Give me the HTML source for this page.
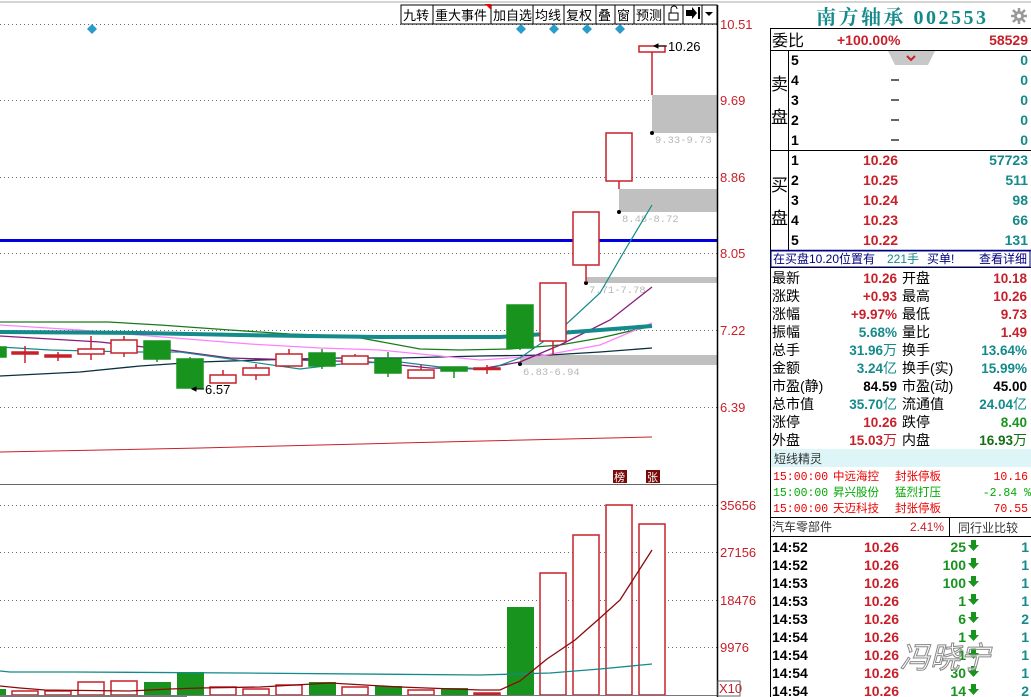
<!DOCTYPE html>
<html><head><meta charset="utf-8"><style>
html,body{margin:0;padding:0;background:#fff;}
svg{display:block;font-family:"Liberation Sans","Noto Sans CJK SC",sans-serif;}
.r{fill:#c8202a}.t{fill:#148a8a}.g{fill:#18941e}.k{fill:#000}
.b{font-weight:bold}
.m{font-family:"Liberation Mono","Noto Sans CJK SC",monospace;}
</style></head><body>
<svg width="1031" height="697" viewBox="0 0 1031 697" xmlns="http://www.w3.org/2000/svg">
<rect width="1031" height="697" fill="#fff"/>
<line x1="0" y1="2" x2="1031" y2="2" stroke="#aaa" stroke-width="1"/>
<g stroke="#666" stroke-width="1" stroke-dasharray="1,3">
<line x1="0" y1="24.5" x2="717" y2="24.5"/><line x1="0" y1="100.5" x2="717" y2="100.5"/><line x1="0" y1="177.5" x2="717" y2="177.5"/><line x1="0" y1="253.5" x2="717" y2="253.5"/><line x1="0" y1="330.5" x2="717" y2="330.5"/><line x1="0" y1="407.5" x2="717" y2="407.5"/>
<line x1="0" y1="505.5" x2="717" y2="505.5"/><line x1="0" y1="552.5" x2="717" y2="552.5"/><line x1="0" y1="600.5" x2="717" y2="600.5"/><line x1="0" y1="647.5" x2="717" y2="647.5"/>
</g>
<rect x="401" y="5" width="316" height="19" fill="#fff" stroke="#000"/>
<g stroke="#000"><line x1="433" y1="5" x2="433" y2="24"/><line x1="491" y1="5" x2="491" y2="24"/><line x1="533" y1="5" x2="533" y2="24"/><line x1="564" y1="5" x2="564" y2="24"/><line x1="596" y1="5" x2="596" y2="24"/><line x1="615" y1="5" x2="615" y2="24"/><line x1="634" y1="5" x2="634" y2="24"/><line x1="664" y1="5" x2="664" y2="24"/><line x1="683" y1="5" x2="683" y2="24"/><line x1="702" y1="5" x2="702" y2="24"/></g>
<polygon points="485,4 491,4 491,10" fill="#e00"/>
<g font-size="13" class="k"><text x="403" y="20">九转</text><text x="435" y="20">重大事件</text><text x="493" y="20">加自选</text><text x="535" y="20">均线</text><text x="566" y="20">复权</text><text x="598" y="20">叠</text><text x="617" y="20">窗</text><text x="636" y="20">预测</text></g>
<rect x="669" y="13" width="9" height="7" fill="none" stroke="#000"/><path d="M671 13 V9 A3 3 0 0 1 677 9" fill="none" stroke="#000"/>
<path d="M686 10 h6 v-3 l5 6 l-5 6 v-3 h-6z M698 7 h2 v12 h-2z" fill="#000"/>
<polygon points="705,12 713,12 709,16" fill="#000"/>
<g fill="#2a9ccc"><polygon points="92,24 97,29 92,34 87,29"/><polygon points="521,24 526,29 521,34 516,29"/><polygon points="554,24 559,29 554,34 549,29"/><polygon points="587,24 592,29 587,34 582,29"/><polygon points="620,24 625,29 620,34 615,29"/></g>
<g fill="#c0c0c0"><rect x="652" y="95" width="65" height="38"/><rect x="619" y="189" width="98" height="23"/><rect x="586" y="277" width="131" height="6"/><rect x="520" y="355" width="197" height="10"/></g>
<g font-size="10.5" fill="#b8b8b8" class="m"><text x="655" y="143">9.33-9.73</text><text x="622" y="222">8.48-8.72</text><text x="589" y="293">7.71-7.78</text><text x="523" y="375">6.83-6.94</text></g>
<g fill="#000"><circle cx="652" cy="133" r="2"/><circle cx="619" cy="212" r="2"/><circle cx="586" cy="283" r="2"/><circle cx="520" cy="364" r="2"/></g>
<rect x="0" y="239" width="717" height="3" fill="#0000e0"/>
<polyline points="0,452 200,448 400,443 652,437" fill="none" stroke="#c8202a" stroke-width="1"/>
<g fill="none">
<polyline points="0,376 80,372 140,366 200,362 260,360 340,358 400,358 480,356 550,355 600,352 652,348" stroke="#0a3040" stroke-width="1.3"/>
<polyline points="0,322 108,322 160,325 230,330 290,334 350,336 420,349 460,350 510,349 560,345 600,338 652,326" stroke="#1a7a1a" stroke-width="1.3"/>
<polyline points="0,325 80,330 150,336 250,344 320,348 380,350 430,355 480,360 540,356 600,345 652,323" stroke="#ff80ff" stroke-width="1.3"/>
<polyline points="0,336 100,342 170,350 230,358 300,360 370,362 430,368 480,369 520,362 560,345 610,320 652,287" stroke="#8a1a7a" stroke-width="1.3"/>
<polyline points="0,347 50,350 130,352 180,352 230,359 300,369 350,363 400,362 440,367 490,369 520,358 560,330 600,293 625,250 652,205" stroke="#148a8a" stroke-width="1.2"/>
<polyline points="0,332 140,333 240,335 380,337 500,337 560,333 600,330 652,326" stroke="#148a8a" stroke-width="4"/>
</g>
<g stroke="#c8202a" stroke-width="1.5" fill="#fff">
<line x1="25" y1="346" x2="25" y2="363"/><rect x="12" y="352" width="26" height="2" fill="#c8202a"/>
<line x1="58" y1="352" x2="58" y2="361"/><rect x="45" y="355" width="26" height="2" fill="#c8202a"/>
<line x1="91" y1="336" x2="91" y2="360"/><rect x="78" y="349" width="26" height="5"/>
<line x1="124" y1="336" x2="124" y2="357"/><rect x="111" y="340" width="26" height="13"/>
<line x1="223" y1="370" x2="223" y2="375"/><rect x="210" y="375" width="26" height="8"/>
<line x1="256" y1="364" x2="256" y2="380"/><rect x="243" y="368" width="26" height="7"/>
<line x1="289" y1="349" x2="289" y2="367"/><rect x="276" y="354" width="26" height="12"/>
<line x1="355" y1="354" x2="355" y2="356"/><rect x="342" y="356" width="26" height="8"/>
<line x1="421" y1="365" x2="421" y2="370"/><rect x="408" y="370" width="26" height="8"/>
<line x1="487" y1="365" x2="487" y2="374"/><rect x="474" y="368" width="26" height="1.5" fill="#c8202a"/>
<line x1="553" y1="341" x2="553" y2="355"/><rect x="540" y="283" width="26" height="58"/>
<line x1="586" y1="265" x2="586" y2="282"/><rect x="573" y="212" width="26" height="53"/>
<line x1="619" y1="181" x2="619" y2="189"/><rect x="606" y="133" width="26" height="48"/>
<line x1="652" y1="52" x2="652" y2="95"/><rect x="639" y="46" width="26" height="6"/>
</g>
<g fill="#18941e" stroke="#18941e" stroke-width="1.5">
<rect x="0" y="347" width="6" height="10"/>
<line x1="157" y1="341" x2="157" y2="362"/><rect x="144" y="341" width="26" height="18"/>
<line x1="190" y1="357" x2="190" y2="388"/><rect x="177" y="359" width="26" height="29"/>
<line x1="322" y1="349" x2="322" y2="369"/><rect x="309" y="353" width="26" height="13"/>
<line x1="388" y1="352" x2="388" y2="377"/><rect x="375" y="359" width="26" height="14"/>
<line x1="454" y1="367" x2="454" y2="378"/><rect x="441" y="367" width="26" height="4"/>
<line x1="520" y1="305" x2="520" y2="350"/><rect x="507" y="305" width="26" height="43"/>
</g>
<g font-size="13" class="k"><text x="205" y="394">6.57</text><text x="668" y="51">10.26</text></g>
<path d="M192 389 h12 M192 389 l4 -2 v4z" stroke="#000" fill="#000"/>
<path d="M654 46 h13 M654 46 l4 -2 v4z" stroke="#000" fill="#000"/>
<rect x="613" y="470" width="14" height="13" fill="#7a0a0a"/><text x="614" y="481" font-size="11" fill="#fff">榜</text>
<rect x="646" y="470" width="14" height="13" fill="#7a0a0a"/><text x="647" y="481" font-size="11" fill="#fff">张</text>
<line x1="0" y1="484.5" x2="717" y2="484.5" stroke="#666"/>
<g fill="#fff" stroke="#c8202a" stroke-width="1.5">
<rect x="12" y="691" width="26" height="4"/><rect x="45" y="691" width="26" height="4"/><rect x="78" y="682" width="26" height="13"/><rect x="111" y="681" width="26" height="14"/><rect x="210" y="687" width="26" height="8"/><rect x="243" y="689" width="26" height="6"/><rect x="276" y="685" width="26" height="10"/><rect x="342" y="687" width="26" height="8"/><rect x="408" y="690" width="26" height="5"/><rect x="474" y="693" width="26" height="2" fill="#c8202a"/>
<rect x="540" y="573" width="26" height="122"/><rect x="573" y="535" width="26" height="160"/><rect x="606" y="505" width="26" height="190"/><rect x="639" y="524" width="26" height="171"/>
</g>
<g fill="#18941e"><rect x="0" y="689" width="6" height="6"/><rect x="144" y="682" width="27" height="13"/><rect x="177" y="672" width="27" height="23"/><rect x="309" y="682" width="27" height="13"/><rect x="375" y="686" width="27" height="9"/><rect x="441" y="688" width="27" height="7"/><rect x="507" y="607" width="27" height="88"/></g>
<polyline points="0,671 10,672 75,672 240,673 480,675 550,673 600,669 652,664" fill="none" stroke="#148a8a" stroke-width="1.3"/>
<polyline points="0,686 20,688 45,690 130,691 170,689 200,688 260,687 330,683 400,687 480,690 500,690 520,681 547,659 575,640 600,618 620,600 652,550" fill="none" stroke="#8a0a0a" stroke-width="1.3"/>
<line x1="0" y1="695.5" x2="717" y2="695.5" stroke="#777"/>
<rect x="0" y="695" width="187" height="2" fill="#777"/>
<line x1="717.5" y1="5" x2="717.5" y2="697" stroke="#000" stroke-width="1.5"/>
<g font-size="13" class="r"><text x="720" y="29">10.51</text><text x="720" y="105">9.69</text><text x="720" y="182">8.86</text><text x="720" y="258">8.05</text><text x="720" y="335">7.22</text><text x="720" y="412">6.39</text>
<text x="720" y="510">35656</text><text x="720" y="557">27156</text><text x="720" y="605">18476</text><text x="720" y="652">9976</text><text x="719" y="693">X10</text></g>
<rect x="718" y="681" width="22" height="15" fill="none" stroke="#666"/>
<line x1="770.5" y1="28" x2="770.5" y2="697" stroke="#000"/>
<text x="816" y="24" font-size="20" class="t b" letter-spacing="2.5" font-family="Liberation Serif, Noto Serif CJK SC, serif">南方轴承 002553</text>
<path d="M1019 8 v16 M1011 16 h16 M1013 10 l12 12 M1025 10 l-12 12" stroke="#999" stroke-width="2.5"/>
<circle cx="1019" cy="16" r="5" fill="#999"/>
<circle cx="1019" cy="16" r="2.2" fill="#fff"/>
<g stroke="#000"><line x1="770" y1="28.5" x2="1031" y2="28.5"/><line x1="770" y1="50.5" x2="1031" y2="50.5"/><line x1="770" y1="150.5" x2="1031" y2="150.5"/><line x1="788.5" y1="50" x2="788.5" y2="250"/><line x1="770" y1="250.5" x2="1031" y2="250.5" stroke="#000080" stroke-width="1.5"/><line x1="770" y1="267.5" x2="1031" y2="267.5"/></g>
<text x="772" y="46" font-size="16" class="k">委比</text>
<text x="837" y="45" font-size="14" class="r b">+100.00%</text>
<text x="1028" y="45" font-size="14" class="r b" text-anchor="end">58529</text>
<polygon points="888,51 935,51 928,65 895,65" fill="#c8c8c8"/>
<path d="M907 56 l4 4 l4 -4" stroke="#c8202a" stroke-width="2" fill="none"/>
<g font-size="17" class="k"><text x="771" y="90">卖</text><text x="771" y="123">盘</text><text x="771" y="191">买</text><text x="771" y="224">盘</text></g>
<g font-size="14" class="k b"><text x="791" y="65">5</text><text x="791" y="85">4</text><text x="791" y="105">3</text><text x="791" y="125">2</text><text x="791" y="145">1</text><text x="791" y="165">1</text><text x="791" y="185">2</text><text x="791" y="205">3</text><text x="791" y="225">4</text><text x="791" y="245">5</text></g>
<g stroke="#000" stroke-width="1.2"><line x1="891" y1="80" x2="899" y2="80"/><line x1="891" y1="100" x2="899" y2="100"/><line x1="891" y1="120" x2="899" y2="120"/><line x1="891" y1="140" x2="899" y2="140"/></g>
<g font-size="14" class="t b" text-anchor="end"><text x="1028" y="65">0</text><text x="1028" y="85">0</text><text x="1028" y="105">0</text><text x="1028" y="125">0</text><text x="1028" y="145">0</text><text x="1028" y="165">57723</text><text x="1028" y="185">511</text><text x="1028" y="205">98</text><text x="1028" y="225">66</text><text x="1028" y="245">131</text></g>
<g font-size="14" class="r b" text-anchor="end"><text x="898" y="165">10.26</text><text x="898" y="185">10.25</text><text x="898" y="205">10.24</text><text x="898" y="225">10.23</text><text x="898" y="245">10.22</text></g>
<rect x="771" y="251" width="259" height="16" fill="none" stroke="#000080"/>
<text x="773" y="263" font-size="12" fill="#000080">在买盘10.20位置有</text>
<text x="887" y="263" font-size="12" class="t">221手</text>
<text x="927" y="263" font-size="12" fill="#000080">买单!</text>
<text x="979" y="263" font-size="12" fill="#000080">查看详细</text>
<g font-size="14" class="k"><text x="772" y="283">最新</text><text x="772" y="301">涨跌</text><text x="772" y="319">涨幅</text><text x="772" y="337">振幅</text><text x="772" y="355">总手</text><text x="772" y="373">金额</text><text x="772" y="391">市盈(静)</text><text x="772" y="409">总市值</text><text x="772" y="427">涨停</text><text x="772" y="445">外盘</text>
<text x="902" y="283">开盘</text><text x="902" y="301">最高</text><text x="902" y="319">最低</text><text x="902" y="337">量比</text><text x="902" y="355">换手</text><text x="902" y="373">换手(实)</text><text x="902" y="391">市盈(动)</text><text x="902" y="409">流通值</text><text x="902" y="427">跌停</text><text x="902" y="445">内盘</text></g>
<g font-size="13.5" class="b" text-anchor="end">
<text x="897" y="283" class="r">10.26</text><text x="897" y="301" class="r">+0.93</text><text x="897" y="319" class="r">+9.97%</text><text x="897" y="337" class="t">5.68%</text><text x="897" y="355" class="t">31.96<tspan font-weight="normal" font-size="14">万</tspan></text><text x="897" y="373" class="t">3.24<tspan font-weight="normal" font-size="14">亿</tspan></text><text x="897" y="391" class="k">84.59</text><text x="897" y="409" class="t">35.70<tspan font-weight="normal" font-size="14">亿</tspan></text><text x="897" y="427" class="r">10.26</text><text x="897" y="445" class="r">15.03<tspan font-weight="normal" font-size="14">万</tspan></text>
<text x="1027" y="283" class="r">10.18</text><text x="1027" y="301" class="r">10.26</text><text x="1027" y="319" class="r">9.73</text><text x="1027" y="337" class="r">1.49</text><text x="1027" y="355" class="t">13.64%</text><text x="1027" y="373" class="t">15.99%</text><text x="1027" y="391" class="k">45.00</text><text x="1027" y="409" class="t">24.04<tspan font-weight="normal" font-size="14">亿</tspan></text><text x="1027" y="427" class="g">8.40</text><text x="1027" y="445" fill="#137013">16.93<tspan font-weight="normal" font-size="14">万</tspan></text></g>
<rect x="771" y="449" width="260" height="18" fill="#def5f8"/>
<text x="774" y="463" font-size="12" fill="#333">短线精灵</text>
<g font-size="11.5">
<text x="773" y="480" fill="#e00" class="m">15:00:00</text><text x="833" y="480" fill="#e00">中远海控</text><text x="895" y="480" fill="#e00">封张停板</text><text x="1028" y="480" fill="#e00" text-anchor="end" class="m">10.16</text>
<text x="773" y="496" fill="#0a0" class="m">15:00:00</text><text x="833" y="496" fill="#0a0">昇兴股份</text><text x="895" y="496" fill="#0a0">猛烈打压</text><text x="1031" y="496" fill="#0a0" text-anchor="end" class="m">-2.84 %</text>
<text x="773" y="512" fill="#e00" class="m">15:00:00</text><text x="833" y="512" fill="#e00">天迈科技</text><text x="895" y="512" fill="#e00">封张停板</text><text x="1028" y="512" fill="#e00" text-anchor="end" class="m">70.55</text>
</g>
<g stroke="#000"><line x1="770" y1="517.5" x2="1031" y2="517.5"/><line x1="770" y1="536.5" x2="1031" y2="536.5"/><line x1="949.5" y1="517" x2="949.5" y2="536"/></g>
<text x="772" y="531" font-size="12" fill="#333">汽车零部件</text>
<text x="944" y="531" font-size="12" fill="#c8202a" text-anchor="end">2.41%</text>
<text x="958" y="532" font-size="12" fill="#333">同行业比较</text>
<g font-size="14" class="b">
<g class="k"><text x="772" y="552">14:52</text><text x="772" y="570">14:52</text><text x="772" y="588">14:53</text><text x="772" y="606">14:53</text><text x="772" y="624">14:53</text><text x="772" y="642">14:54</text><text x="772" y="660">14:54</text><text x="772" y="678">14:54</text><text x="772" y="696">14:54</text></g>
<g class="r" text-anchor="end"><text x="899" y="552">10.26</text><text x="899" y="570">10.26</text><text x="899" y="588">10.26</text><text x="899" y="606">10.26</text><text x="899" y="624">10.26</text><text x="899" y="642">10.26</text><text x="899" y="660">10.26</text><text x="899" y="678">10.26</text><text x="899" y="696">10.26</text></g>
<g class="g" text-anchor="end"><text x="966" y="552">25</text><text x="966" y="570">100</text><text x="966" y="588">100</text><text x="966" y="606">1</text><text x="966" y="624">6</text><text x="966" y="642">1</text><text x="966" y="660">1</text><text x="966" y="678">30</text><text x="966" y="696">14</text></g>
<g class="t" text-anchor="end"><text x="1029" y="552">1</text><text x="1029" y="570">1</text><text x="1029" y="588">1</text><text x="1029" y="606">1</text><text x="1029" y="624">2</text><text x="1029" y="642">1</text><text x="1029" y="660">1</text><text x="1029" y="678">1</text><text x="1029" y="696">2</text></g>
</g>
<g fill="#18941e">
<path d="M971 540 h5 v5 h3 l-5.5 6 l-5.5 -6 h3z"/><path d="M971 558 h5 v5 h3 l-5.5 6 l-5.5 -6 h3z"/><path d="M971 576 h5 v5 h3 l-5.5 6 l-5.5 -6 h3z"/><path d="M971 594 h5 v5 h3 l-5.5 6 l-5.5 -6 h3z"/><path d="M971 612 h5 v5 h3 l-5.5 6 l-5.5 -6 h3z"/><path d="M971 630 h5 v5 h3 l-5.5 6 l-5.5 -6 h3z"/><path d="M971 648 h5 v5 h3 l-5.5 6 l-5.5 -6 h3z"/><path d="M971 666 h5 v5 h3 l-5.5 6 l-5.5 -6 h3z"/><path d="M971 684 h5 v5 h3 l-5.5 6 l-5.5 -6 h3z"/>
</g>
<text x="900" y="668" font-size="30" fill="#fff" fill-opacity="0.6" stroke="#888" stroke-width="1" font-style="italic">冯晓宁</text>
</svg>
</body></html>
